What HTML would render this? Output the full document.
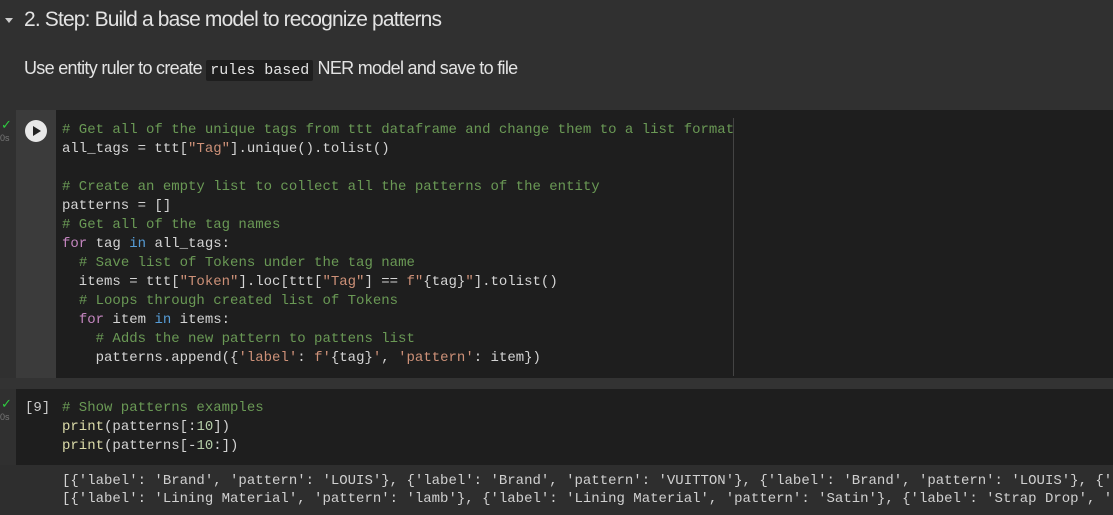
<!DOCTYPE html>
<html><head><style>
html,body{margin:0;padding:0;width:1113px;height:515px;overflow:hidden;background:#303030;}
body{position:relative;font-family:"Liberation Sans",sans-serif;}
.h{position:absolute;left:24px;top:8px;font-size:21px;letter-spacing:-0.85px;color:#e3e3e3;white-space:nowrap;}
.tri{position:absolute;left:5px;top:18px;width:0;height:0;border-left:4px solid transparent;border-right:4px solid transparent;border-top:5px solid #ccc;}
.p{position:absolute;left:24px;top:58px;font-size:18px;letter-spacing:-0.7px;color:#e3e3e3;white-space:nowrap;}
.p code{font-family:"Liberation Mono",monospace;font-size:15px;letter-spacing:0;background:#1e1e1e;padding:2px 4px;border-radius:2px;}
.cell1{position:absolute;left:16px;top:110px;width:1097px;height:268px;background:#1e1e1e;}
.gut{position:absolute;left:16px;top:110px;width:40px;height:268px;background:#3b3b3b;}
.strip{position:absolute;left:0;top:378px;width:1113px;height:11px;background:#333;}
.cell2{position:absolute;left:16px;top:389px;width:1097px;height:76px;background:#1e1e1e;}
.out{position:absolute;left:0;top:465px;width:1113px;height:50px;background:#2e2e2e;overflow:hidden;}
pre{margin:0;position:absolute;font-family:"Liberation Mono",monospace;font-size:14px;line-height:19px;color:#d4d4d4;white-space:pre;}
.c{color:#6a9955}.s{color:#ce9178}.k{color:#c586c0}.b{color:#569cd6}.f{color:#dcdcaa}.n{color:#b5cea8}
.run{position:absolute;left:25px;top:120px;width:22px;height:22px;border-radius:50%;background:#e8e8e8;}
.run:after{content:"";position:absolute;left:8px;top:6px;border-top:5px solid transparent;border-bottom:5px solid transparent;border-left:8px solid #222;}
.chk{position:absolute;left:1px;color:#2ecc40;font-size:13px;}
.t{position:absolute;left:0;font-size:9px;color:#777;}
.ruler{position:absolute;left:733px;top:118px;width:1px;height:258px;background:#444;}
</style></head><body>
<div class="tri"></div>
<div class="h">2. Step: Build a base model to recognize patterns</div>
<div class="p">Use entity ruler to create <code>rules based</code> NER model and save to file</div>
<div class="cell1"></div><div class="gut"></div>
<div class="ruler"></div>
<div class="run"></div>
<div class="chk" style="top:117px">✓</div><div class="t" style="top:133px">0s</div>
<pre style="left:62px;top:121px"><span class="c"># Get all of the unique tags from ttt dataframe and change them to a list format</span>
all_tags = ttt[<span class="s">"Tag"</span>].unique().tolist()

<span class="c"># Create an empty list to collect all the patterns of the entity</span>
patterns = []
<span class="c"># Get all of the tag names</span>
<span class="k">for</span> tag <span class="b">in</span> all_tags:
  <span class="c"># Save list of Tokens under the tag name</span>
  items = ttt[<span class="s">"Token"</span>].loc[ttt[<span class="s">"Tag"</span>] == <span class="s">f"</span>{tag}<span class="s">"</span>].tolist()
  <span class="c"># Loops through created list of Tokens</span>
  <span class="k">for</span> item <span class="b">in</span> items:
    <span class="c"># Adds the new pattern to pattens list</span>
    patterns.append({<span class="s">'label'</span>: <span class="s">f'</span>{tag}<span class="s">'</span>, <span class="s">'pattern'</span>: item})</pre>
<div class="strip"></div>
<div class="cell2"></div>
<div class="chk" style="top:396px">✓</div><div class="t" style="top:412px">0s</div>
<pre style="left:25px;top:399px;color:#ccc">[9]</pre>
<pre style="left:62px;top:399px"><span class="c"># Show patterns examples</span>
<span class="f">print</span>(patterns[:<span class="n">10</span>])
<span class="f">print</span>(patterns[-<span class="n">10</span>:])</pre>
<div class="out"><pre style="left:62px;top:7px;font-size:14px;line-height:18px;color:#d0d0d0">[{'label': 'Brand', 'pattern': 'LOUIS'}, {'label': 'Brand', 'pattern': 'VUITTON'}, {'label': 'Brand', 'pattern': 'LOUIS'}, {'
[{'label': 'Lining Material', 'pattern': 'lamb'}, {'label': 'Lining Material', 'pattern': 'Satin'}, {'label': 'Strap Drop', '</pre></div>
</body></html>
